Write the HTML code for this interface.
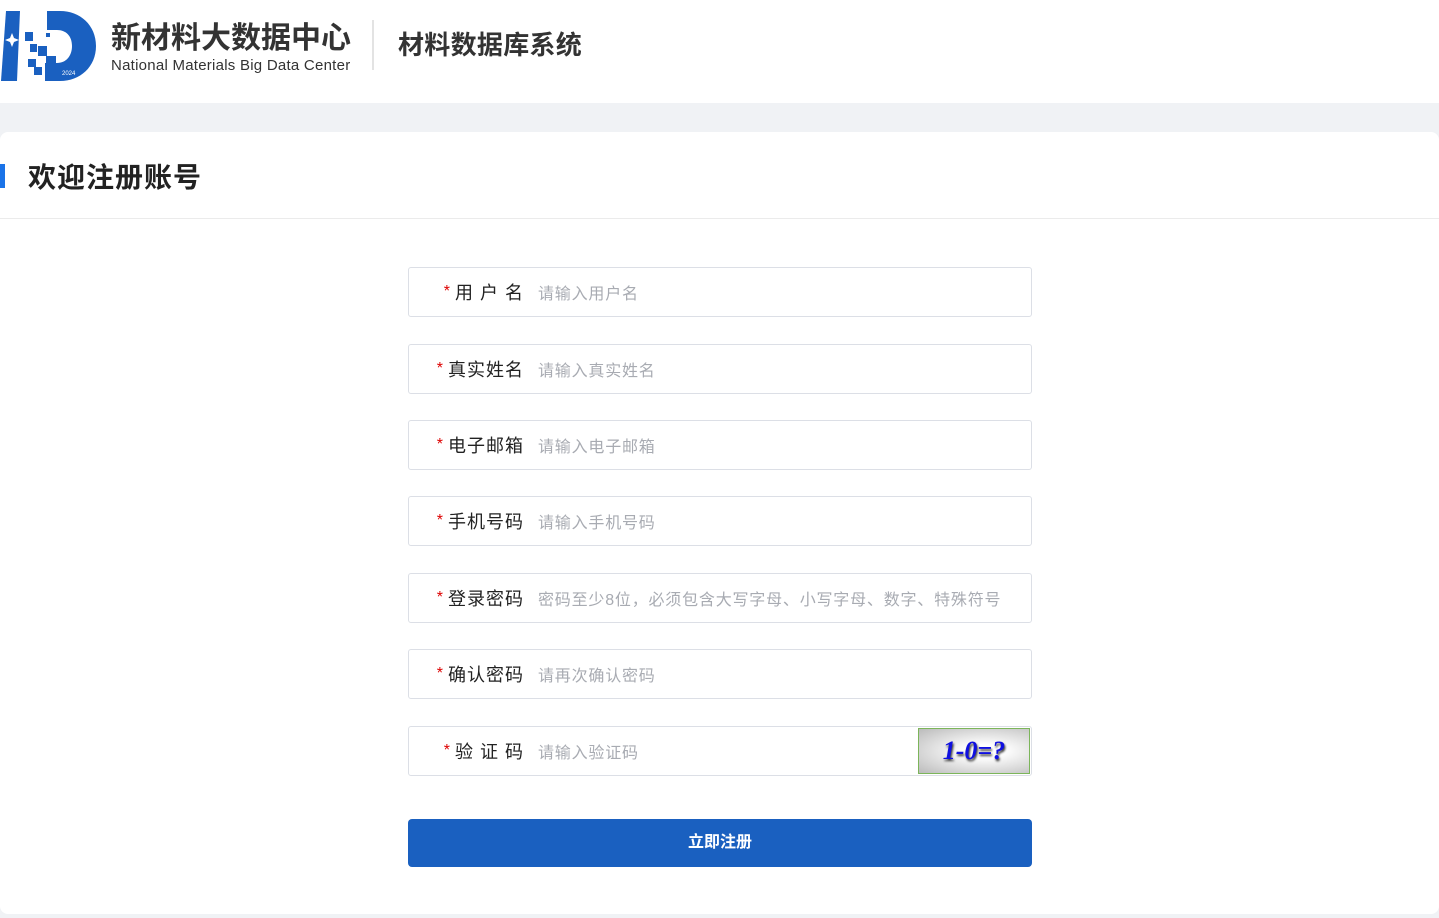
<!DOCTYPE html>
<html><head><meta charset="utf-8"><style>
*{margin:0;padding:0;box-sizing:border-box}
body{width:1439px;height:918px;background:#f0f2f5;font-family:"Liberation Sans","Noto Sans CJK SC",sans-serif;overflow:hidden;position:relative}
.hdr{position:absolute;left:0;top:0;width:1439px;height:103px;background:#fff}
.card{position:absolute;left:0;top:132px;width:1439px;height:782px;background:#fff;border-radius:8px}
.t1{position:absolute;left:111px;top:13px;font-size:30px;font-weight:bold;color:#333}
.t2{position:absolute;left:111px;top:57px;font-size:15px;letter-spacing:0.25px;color:#333}
.vl{position:absolute;left:372px;top:20px;width:2px;height:50px;background:#e3e3e3}
.t3{position:absolute;left:398px;top:25px;font-size:26px;font-weight:bold;color:#333;letter-spacing:0.3px}
.bar{position:absolute;left:0;top:164px;width:5px;height:24px;background:#1a73e8}
.title{position:absolute;left:28px;top:156px;font-size:28px;letter-spacing:1px;font-weight:bold;color:#222}
.hl{position:absolute;left:0;top:218px;width:1439px;height:1px;background:#ebebeb}
.f{position:absolute;left:408px;width:624px;height:50px;border:1px solid #dcdfe6;border-radius:3px}
.f .l{position:absolute;right:508px;top:11px;font-size:18px;letter-spacing:1px;margin-right:-1px;color:#222;white-space:nowrap}
.f .l b{color:#d00;font-weight:normal;font-size:16px;margin-right:4px;vertical-align:3px}
.f .p{position:absolute;left:129px;top:12px;font-size:16px;letter-spacing:0.8px;color:#a8abb2;white-space:nowrap}
.cap{position:absolute;right:1px;top:1px;width:112px;height:46px;border:1px solid #7cb55a;background:radial-gradient(ellipse at 60% 50%,#fff 20%,#bbb 100%);font:italic bold 26px "Liberation Serif",serif;color:#1010e0;text-align:center;line-height:44px;text-shadow:1px 2px 2px #333}
.btn{position:absolute;left:408px;top:819px;width:624px;height:48px;background:#1a60c0;border-radius:4px;color:#fff;font-size:16px;font-weight:bold;text-align:center;line-height:48px}
</style></head><body>
<div class="hdr">
<svg style="position:absolute;left:0;top:8px" width="98" height="76" viewBox="0 0 98 76">
<path d="M6 3h14l-3 70H1z" fill="#1a60c0"/>
<path d="M47 3h13c20 0 36 14 36 35s-16 35-36 35H45V55h12c9 0 15-7 15-17s-6-16-15-16H47z" fill="#1a60c0"/>
<rect x="25" y="24" width="8" height="9" fill="#1a60c0"/><rect x="30" y="36" width="7" height="8" fill="#1a60c0"/><rect x="38" y="38" width="9" height="10" fill="#1a60c0"/><rect x="28" y="51" width="8" height="8" fill="#1a60c0"/><rect x="34" y="59" width="8" height="8" fill="#1a60c0"/><rect x="46" y="48" width="10" height="10" fill="#1a60c0"/><rect x="46" y="25" width="4" height="4" fill="#1a60c0"/><rect x="60" y="4" width="5" height="5" fill="#1a60c0"/>
<path d="M12 25l2 5 5 2-5 2-2 5-2-5-5-2 5-2z" fill="#fff"/>
<text x="62" y="67" font-size="6" fill="#fff" font-family="Liberation Sans">2024</text>
</svg>
<div class="t1">新材料大数据中心</div>
<div class="t2">National Materials Big Data Center</div>
<div class="vl"></div>
<div class="t3">材料数据库系统</div>
</div>
<div class="card"></div>
<div class="bar"></div><div class="title">欢迎注册账号</div><div class="hl"></div>
<div class="f" style="top:267px"><span class="l"><b>*</b>用 户 名</span><span class="p">请输入用户名</span></div>
<div class="f" style="top:344px"><span class="l"><b>*</b>真实姓名</span><span class="p">请输入真实姓名</span></div>
<div class="f" style="top:420px"><span class="l"><b>*</b>电子邮箱</span><span class="p">请输入电子邮箱</span></div>
<div class="f" style="top:496px"><span class="l"><b>*</b>手机号码</span><span class="p">请输入手机号码</span></div>
<div class="f" style="top:573px"><span class="l"><b>*</b>登录密码</span><span class="p">密码至少8位，必须包含大写字母、小写字母、数字、特殊符号</span></div>
<div class="f" style="top:649px"><span class="l"><b>*</b>确认密码</span><span class="p">请再次确认密码</span></div>
<div class="f" style="top:726px"><span class="l"><b>*</b>验 证 码</span><span class="p">请输入验证码</span><div class="cap">1-0=?</div></div>
<div class="btn">立即注册</div>
</body></html>
